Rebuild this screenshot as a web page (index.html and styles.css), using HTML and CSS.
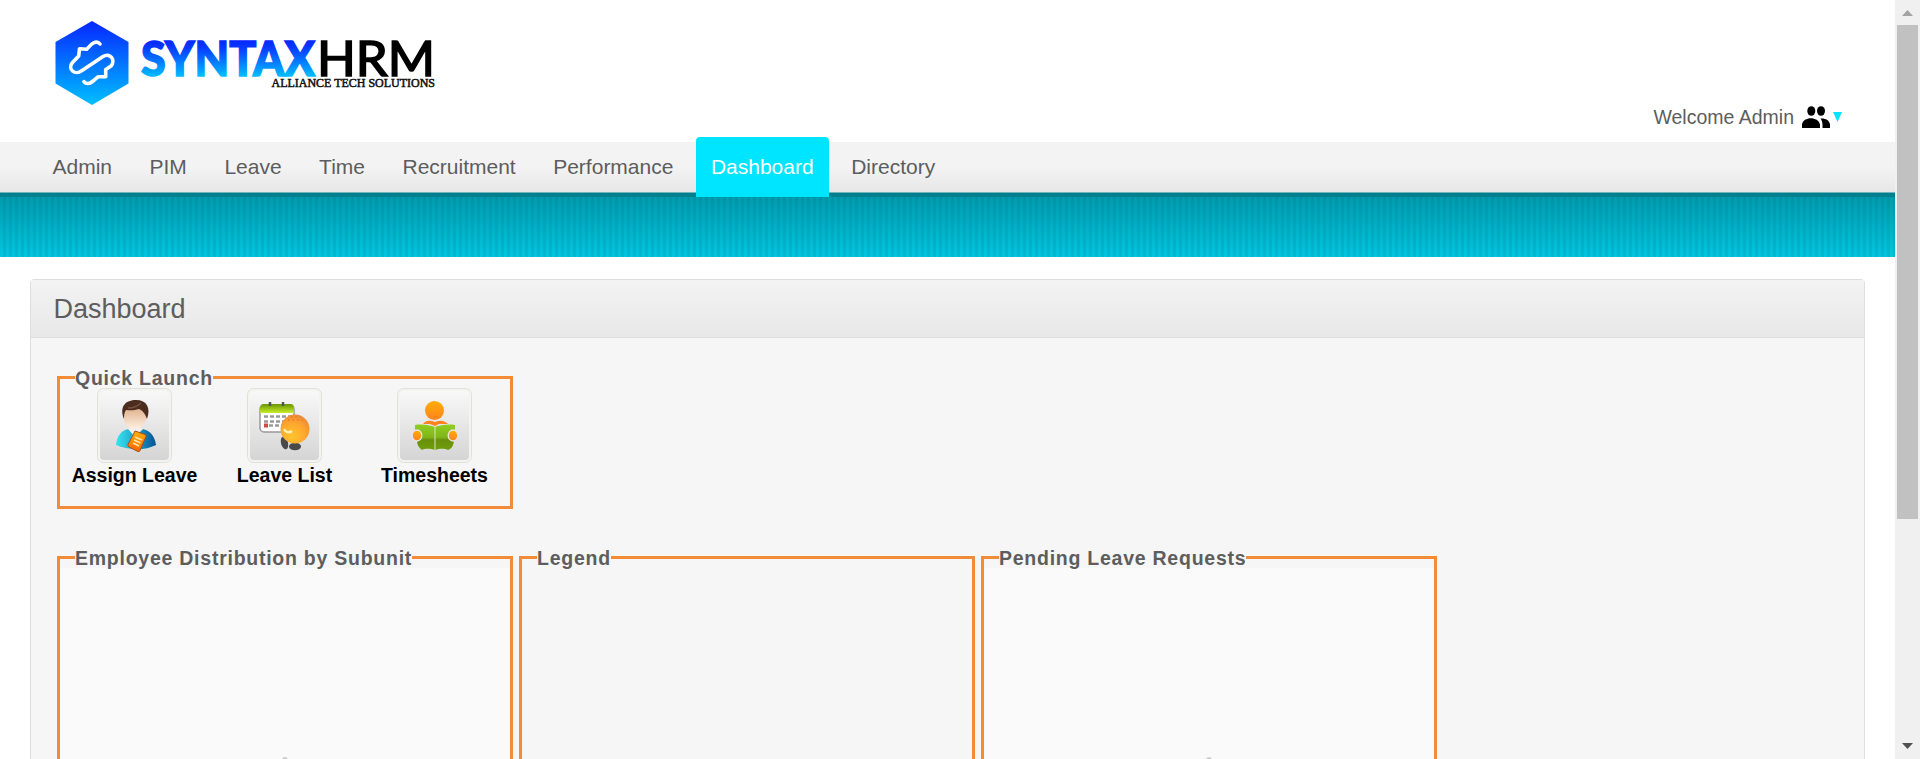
FILE: index.html
```html
<!DOCTYPE html>
<html lang="en">
<head>
<meta charset="utf-8">
<title>SyntaxHRM Dashboard</title>
<link rel="stylesheet" href="styles.css">
</head>
<body>
<div class="window">
  <div class="page">
    <header class="branding">
      <svg class="logo" width="390" height="96" viewBox="0 0 390 96" role="img" aria-label="SyntaxHRM">
        <defs>
          <linearGradient id="hex" x1="0" y1="0" x2="0" y2="1"><stop offset="0" stop-color="#0626ff"/><stop offset="1" stop-color="#00c0ff"/></linearGradient>
          <linearGradient id="word" gradientUnits="userSpaceOnUse" x1="0" y1="30" x2="0" y2="67"><stop offset="0" stop-color="#0626ff"/><stop offset=".2" stop-color="#0838ff"/><stop offset="1" stop-color="#00c0ff"/></linearGradient>
        </defs>
        <path d="M42 11L78.500 32V73.500L42 95L5.500 73.500V32Z" fill="url(#hex)"/>
        <path class="knot" d="M50 34C48.500 32 46 31.800 43.500 32.800C41 34 39 37 36.700 39.300L29.500 38.700L28.700 46L22.500 52.500C17 59 25 66 31.700 60.700L53 46.500C60 42 66 50 61 56L55.700 59.500V66.700H48.300L42.500 71.500C39.500 74 36 74 34 71.700"/>
        <text class="logo-syntax" x="91" y="66" textLength="174" lengthAdjust="spacingAndGlyphs" fill="url(#word)" stroke="url(#word)">SYNTAX</text>
        <text class="logo-hrm" x="267" y="66" textLength="118" lengthAdjust="spacingAndGlyphs">HRM</text>
        <text class="logo-tag" x="221.500" y="77" textLength="163.500" lengthAdjust="spacingAndGlyphs">ALLIANCE TECH SOLUTIONS</text>
      </svg>
      <div class="welcome">
        <span>Welcome Admin</span>
        <svg class="people" width="28" height="22" viewBox="0 0 28 22">
          <ellipse cx="9.300" cy="5" rx="4" ry="4.800"/><ellipse cx="19" cy="5" rx="4" ry="4.800"/>
          <path d="M0 22V18.500C1 10 16.500 10 18 18.500V22ZM18.500 12.500C23 12 27.500 14 28 18.500V22H20.500V18.500C20.300 16 19.800 14 18.500 12.500Z"/>
        </svg>
        <svg class="caret" width="9" height="10" viewBox="0 0 9 10"><path d="M0 0H9L4.500 10Z"/></svg>
      </div>
    </header>
    <nav class="menu">
      <a>Admin</a><a>PIM</a><a>Leave</a><a>Time</a><a>Recruitment</a><a>Performance</a><a class="current">Dashboard</a><a>Directory</a>
    </nav>
    <div class="submenu"></div>
    <main class="box">
      <h1 class="head">Dashboard</h1>
      <div class="inner">
        <fieldset class="panel quick">
          <legend>Quick Launch</legend>
          <div class="launchers">
            <a class="launcher">
              <svg class="tile" viewBox="0 0 75 75">
                <defs>
                  <linearGradient id="tile" x1="0" y1="0" x2="0" y2="1"><stop offset="0" stop-color="#f8f8f8"/><stop offset="1" stop-color="#d5d5d5"/></linearGradient>
                  <linearGradient id="shirt"><stop offset="0" stop-color="#38e4ed"/><stop offset=".45" stop-color="#22a8d0"/><stop offset="1" stop-color="#075294"/></linearGradient>
                  <linearGradient id="face" x1="0" y1="0" x2="0" y2="1"><stop offset="0" stop-color="#d9a57c"/><stop offset="1" stop-color="#fff0e3"/></linearGradient>
                  <linearGradient id="book" x1="0" y1="0" x2="0" y2="1"><stop offset="0" stop-color="#ffb300"/><stop offset="1" stop-color="#ff6200"/></linearGradient>
                </defs>
                <rect class="tile-edge" x=".5" y=".5" width="74" height="74" rx="6"/>
                <rect x="3" y="3" width="69" height="69" rx="4" fill="url(#tile)"/>
                <path d="M33 37H44V47H33Z" fill="#eab78f"/>
                <path d="M19 57C20 47 25 42 32 41L38 46L46 41C54 43 58 49 59 57C48 63 30 62 19 57Z" fill="url(#shirt)"/>
                <path d="M31 41L38 49L46 41L43 39H34Z" fill="#f5eee8"/>
                <ellipse cx="38" cy="28.500" rx="11.500" ry="12.500" fill="url(#face)"/>
                <path d="M27 31C22 18 29 12 39 12C50 12 54 20 50 31C48 25 45 22 42 21C36 23 31 22 29 22C27 25 27 28 27 31Z" fill="#4d2c20"/>
                <path d="M31 20C36 20 41 18 44 15" class="hair"/>
                <path d="M38 43L48 46.500Q49.500 47 49 48.500L43 62.500Q42.500 64 41 63.500L32 59Q30.500 58 31 56.500Z" fill="url(#book)" stroke="#a54b1c"/>
                <path class="lines" d="M38 49L45 52M37 52L43.500 55M36 55L42 58"/>
              </svg>
              <span>Assign Leave</span>
            </a>
            <a class="launcher">
              <svg class="tile" viewBox="0 0 75 75">
                <defs>
                  <linearGradient id="cal" x1="0" y1="0" x2="0" y2="1"><stop offset="0" stop-color="#669600"/><stop offset="1" stop-color="#c9ec2c"/></linearGradient>
                  <radialGradient id="ball" cx=".4" cy=".75" r=".75"><stop offset="0" stop-color="#ffc52e"/><stop offset=".6" stop-color="#ffa62e"/><stop offset="1" stop-color="#ed8c38"/></radialGradient>
                </defs>
                <rect class="tile-edge" x=".5" y=".5" width="74" height="74" rx="6"/>
                <rect x="3" y="3" width="69" height="69" rx="4" fill="url(#tile)"/>
                <rect x="13" y="17" width="34" height="27" rx="4" fill="#fff" stroke="#999" stroke-width="1.500"/>
                <path d="M13 25V20Q13 16 17 16H43Q47 16 47 20V25Z" fill="url(#cal)"/>
                <path class="rings" d="M23 14V18M36 14V18"/>
                <path class="days" d="M17 28.500H45M17 33.500H39M22 37.500H38"/>
                <rect x="17" y="35.500" width="4" height="4" fill="#cf4a43"/>
                <ellipse cx="37.500" cy="55" rx="3.500" ry="6.500" transform="rotate(-15 37.500 55)" fill="#494949"/>
                <ellipse cx="48" cy="58.500" rx="6" ry="3.800" fill="#494949"/>
                <circle cx="48" cy="41" r="14.500" fill="url(#ball)"/>
                <path class="smile" d="M37 41C39 45 42 45 45 43"/>
                <path class="freckles" d="M41 32H58M44 29H54"/>
              </svg>
              <span>Leave List</span>
            </a>
            <a class="launcher">
              <svg class="tile" viewBox="0 0 75 75">
                <defs>
                  <linearGradient id="orange" x1="0" y1="0" x2="0" y2="1"><stop offset="0" stop-color="#ffae05"/><stop offset="1" stop-color="#ff8220"/></linearGradient>
                  <linearGradient id="green" x1="0" y1="0" x2="0" y2="1"><stop offset="0" stop-color="#90ce20"/><stop offset=".5" stop-color="#80b51a"/><stop offset=".6" stop-color="#688f0c"/><stop offset="1" stop-color="#719e0a"/></linearGradient>
                </defs>
                <rect class="tile-edge" x=".5" y=".5" width="74" height="74" rx="6"/>
                <rect x="3" y="3" width="69" height="69" rx="4" fill="url(#tile)"/>
                <circle cx="37.500" cy="22.500" r="9.500" fill="url(#orange)"/>
                <path d="M26 36C29 32 33 32 38 34C43 32 47 32 51 36L42 36L38 38L33 36Z" fill="#ff8220"/>
                <path d="M18 37C25 36 33 37 38 39C43 37 51 36 58 37V42H55V53H57C56 59 54 61 51 62C46 60 42 61 38 62C34 61 29 60 25 62C22 60 20 57 20 53H22V42H18Z" fill="url(#green)"/>
                <path d="M38 39V62" stroke="#d8e6b8"/>
                <g fill="url(#orange)" stroke="#e7e7e7" stroke-width="1.300"><ellipse cx="20" cy="47.500" rx="4.800" ry="5.500"/><ellipse cx="56" cy="47.500" rx="4.800" ry="5.500"/></g>
              </svg>
              <span>Timesheets</span>
            </a>
          </div>
        </fieldset>
        <div class="widgets">
          <fieldset class="panel widget">
            <legend>Employee Distribution by Subunit</legend>
            <div class="canvas"><i class="spinner"></i></div>
          </fieldset>
          <fieldset class="panel widget">
            <legend>Legend</legend>
          </fieldset>
          <fieldset class="panel widget">
            <legend>Pending Leave Requests</legend>
            <div class="canvas"><i class="spinner"></i></div>
          </fieldset>
        </div>
      </div>
    </main>
  </div>
  <div class="scrollbar">
    <svg width="25" height="25" viewBox="0 0 25 25"><path d="M7 16H18L12.500 10Z" fill="#a3a3a3"/></svg>
    <div class="thumb"></div>
    <svg width="25" height="25" viewBox="0 0 25 25"><path d="M7 9H18L12.500 15Z" fill="#505050"/></svg>
  </div>
</div>
</body>
</html>
```
FILE: styles.css
```css
* { box-sizing: border-box; }
body {
  margin: 0;
  background: #fff;
  color: #5d5d5d;
  font-family: "Liberation Sans", Arial, sans-serif;
  font-size: 19.5px;
}
.window { display: flex; height: 759px; overflow: hidden; }
.page { flex: 1; min-width: 0; }

.branding {
  display: flex;
  justify-content: space-between;
  align-items: flex-start;
  height: 142px;
  padding: 10px 53px 0 50px;
}
.logo { display: block; }
.knot { fill: none; stroke: #fff; stroke-width: 3.600; stroke-linecap: round; stroke-linejoin: round; }
.logo-syntax { font: 900 47px Lato, sans-serif; stroke-width: 1.500; }
.logo-hrm { font: 400 48px Lato, sans-serif; fill: #000; stroke: #000; stroke-width: 1.600; }
.logo-tag { font: 400 11.500px "Liberation Serif", serif; fill: #111; stroke: #111; stroke-width: .5; }
.welcome { display: flex; align-items: center; padding-top: 95px; line-height: 24px; }
.people { margin-left: 8px; }
.caret { margin-left: 3px; fill: #00e5ff; }

.menu {
  display: flex;
  align-items: flex-end;
  gap: 7.5px;
  height: 55px;
  padding-left: 37.5px;
  border-bottom: 4px solid #00808f;
  background: linear-gradient(#f3f3f3 50%, #e6e6e6);
  box-shadow: inset 0 -1px #73b4bc;
  font-size: 21px;
}
.menu a { height: 51px; padding: 0 15px; line-height: 50px; }
.menu .current {
  height: 60px;
  margin-bottom: -4px;
  border-radius: 4px 4px 0 0;
  background: #00e5ff;
  color: #fff;
  line-height: 60px;
}
.submenu {
  height: 60px;
  background:
    repeating-linear-gradient(90deg, rgba(0, 0, 0, 0) 0 3px, rgba(0, 60, 80, .09) 3px 6px),
    linear-gradient(#009bae, #00c6df);
}

.box {
  height: 520px;
  margin: 22px 30px 0;
  border: 1px solid #dedede;
  border-radius: 4px;
  background: #f6f6f6;
}
.head {
  height: 58px;
  margin: 0;
  padding-left: 22.5px;
  border-bottom: 1px solid #dedede;
  background: linear-gradient(#f3f3f3, #e8e8e8);
  font-size: 27px;
  font-weight: 400;
  line-height: 59px;
}
.inner { padding: 28px 26px 0; }
.panel {
  width: 456px;
  min-width: 0;
  margin: 0;
  padding: 0;
  border: 3px solid #f28c38;
}
.panel legend {
  margin-left: 15px;
  padding: 2px 0 0;
  font-weight: 700;
  letter-spacing: .75px;
  line-height: 21px;
}
.quick { height: 143px; }
.launchers { display: flex; margin: -1px 0 0 -.5px; }
.launcher {
  display: flex;
  flex-direction: column;
  align-items: center;
  width: 150px;
  color: #000;
  font-weight: 700;
  line-height: 25px;
}
.tile { display: block; width: 75px; height: 75px; }
.tile-edge { fill: #f3f3f0; stroke: #e1e1dc; }
.hair { fill: none; stroke: #74513e; stroke-width: 1.500; }
.lines { stroke: #ffe9a8; stroke-width: 1.500; }
.rings { stroke: #555; stroke-width: 2.500; }
.days { stroke: #999; stroke-width: 2.500; stroke-dasharray: 4 2; }
.smile { fill: none; stroke: #fff0b8; stroke-width: 2.500; }
.freckles { stroke: #e16e20; stroke-dasharray: 1.500 3; }
.widgets { display: flex; gap: 6px; margin-top: 37px; }
.widget { height: 400px; }
.canvas {
  display: flex;
  justify-content: center;
  height: 370px;
  margin-top: -1px;
  padding-top: 189px;
  background: #fafafa;
}
.spinner { width: 6px; height: 6px; border-radius: 50%; background: #cfcfcf; }

.scrollbar { display: flex; flex-direction: column; width: 25px; background: #f0f0f0; }
.scrollbar svg { display: block; }
.thumb { height: 494px; margin: 0 2px 215px; background: #c1c1c1; }
```
